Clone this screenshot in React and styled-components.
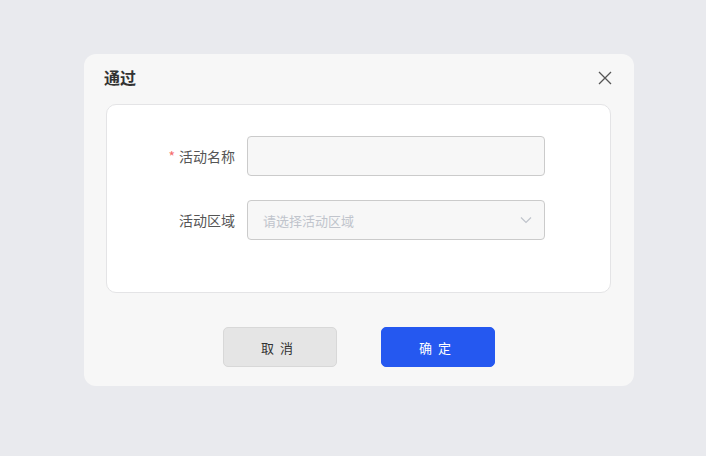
import React from "react";
import styled, { createGlobalStyle } from "styled-components";

const Global = createGlobalStyle`
  html, body { margin: 0; padding: 0; background: #e9eaee; }
  body { font-family: "Noto Sans CJK SC", "Noto Sans", sans-serif; }
  * { box-sizing: border-box; }
`;

const Page = styled.div`
  width: 706px;
  height: 456px;
  padding-top: 54px;
  padding-left: 84px;
`;

const Dialog = styled.div`
  width: 550px;
  height: 332px;
  background: #f7f7f7;
  border-radius: 12px;
  display: flex;
  flex-direction: column;
`;

const Header = styled.div`
  display: flex;
  align-items: center;
  justify-content: space-between;
  padding: 0 20px;
  height: 50px;
  padding-bottom: 4px;
`;

const Title = styled.div`
  font-size: 16px;
  font-weight: 700;
  color: #333;
  line-height: 24px;
`;

const Close = styled.button`
  border: none;
  background: none;
  padding: 0;
  width: 16px;
  height: 16px;
  margin-right: 1px;
  margin-top: 2px;
  display: flex;
  align-items: center;
  justify-content: center;
  cursor: pointer;
`;

const Card = styled.div`
  margin: 0 23px 0 22px;
  height: 189px;
  background: #fff;
  border: 1px solid #e4e4e6;
  border-radius: 10px;
  padding: 31px 0 0 28px;
  display: flex;
  flex-direction: column;
  gap: 24px;
`;

const Row = styled.div`
  display: flex;
  align-items: center;
`;

const Label = styled.label`
  width: 112px;
  padding-right: 12px;
  text-align: right;
  font-size: 14px;
  color: #555;
`;

const Star = styled.span`
  color: #f56c6c;
  margin-right: 4px;
`;

const Field = styled.div`
  width: 298px;
  height: 40px;
  background: #f7f7f7;
  border: 1px solid #cbcbcb;
  border-radius: 4px;
  display: flex;
  align-items: center;
  justify-content: space-between;
  padding: 0 12px 0 15px;
  font-size: 13px;
  color: #c0c4cc;
`;

const Footer = styled.div`
  display: flex;
  justify-content: center;
  gap: 44px;
  margin-top: 34px;
`;

const Button = styled.button`
  width: 114px;
  height: 40px;
  border-radius: 5px;
  font-family: "Noto Sans CJK SC", sans-serif;
  font-size: 13px;
  letter-spacing: 6px;
  padding-left: 6px;
  border: 1px solid ${(p) => (p.$primary ? "#2558f0" : "#d8d8d8")};
  background: ${(p) => (p.$primary ? "#2558f0" : "#e5e5e5")};
  color: ${(p) => (p.$primary ? "#fff" : "#333")};
`;

export default function App() {
  return (
    <Page>
      <Global />
      <Dialog>
        <Header>
          <Title>通过</Title>
          <Close aria-label="close">
            <svg width="14" height="14" viewBox="0 0 14 14">
              <path d="M1 1L13 13M13 1L1 13" stroke="#555" strokeWidth="1.3" fill="none" />
            </svg>
          </Close>
        </Header>
        <Card>
          <Row>
            <Label><Star>*</Star>活动名称</Label>
            <Field />
          </Row>
          <Row>
            <Label>活动区域</Label>
            <Field>
              <span>请选择活动区域</span>
              <svg width="12" height="8" viewBox="0 0 12 8">
                <path d="M1 1.5L6 6.5L11 1.5" stroke="#c0c4cc" strokeWidth="1.2" fill="none" />
              </svg>
            </Field>
          </Row>
        </Card>
        <Footer>
          <Button>取消</Button>
          <Button $primary>确定</Button>
        </Footer>
      </Dialog>
    </Page>
  );
}
